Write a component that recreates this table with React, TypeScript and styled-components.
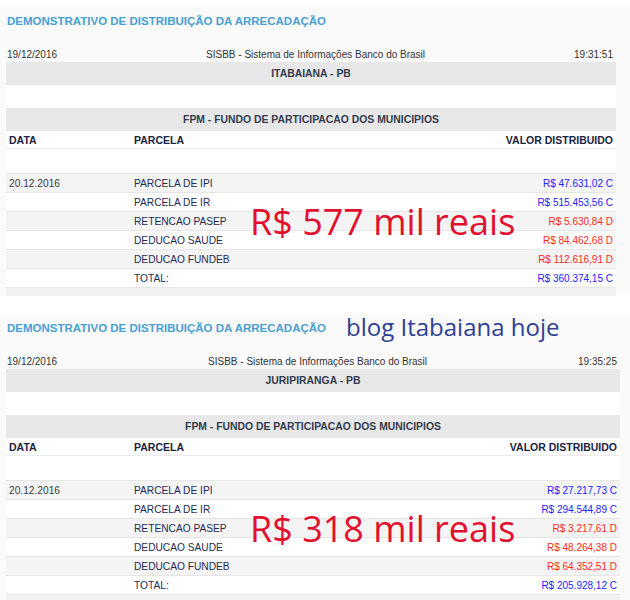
import React from "react"
import styled, { createGlobalStyle } from "styled-components"

type Lancamento = {
    data?: string
    parcela: string
    valor: string
    credito: boolean
}

type Demonstrativo = {
    hora: string
    municipio: string
    largura: number
    nota: string
    blog?: boolean
    linhas: Lancamento[]
}

const GlobalStyle = createGlobalStyle`
    body {
        margin: 0;
        background: #ffffff;
        font-family: "Liberation Sans", Arial, sans-serif;
    }
`

const Page = styled.div`
    width: 630px;
    height: 600px;
    overflow: hidden;
    padding-top: 7px;
    display: flex;
    flex-direction: column;
    gap: 19px;
`

const Panel = styled.section`
    background: #fafafa;
    padding: 0 0 0 6px;
    height: 288px;
    flex-shrink: 0;
`

const TitleRow = styled.div`
    display: flex;
    align-items: center;
    height: 27px;
    padding-left: 1px;
`

const Title = styled.h2`
    margin: 0;
    font-size: 11.5px;
    font-weight: bold;
    color: #4a9fd2;
`

const Blog = styled.span`
    margin-left: 20px;
    margin-top: -3px;
    font-family: "Open Sans", "Noto Sans", sans-serif;
    font-size: 24px;
    color: #2e3f95;
`

const Table = styled.div`
    margin-top: 14px;
    position: relative;
    width: ${(props: { width: number }) => props.width}px;
`

const InfoRow = styled.div`
    display: flex;
    justify-content: space-between;
    height: 14px;
    line-height: 14px;
    font-size: 10px;
    color: #333;
    padding: 0 3px 0 1px;
`

const Bar = styled.div`
    height: 23px;
    line-height: 23px;
    background: #e8e8e8;
    text-align: center;
    font-size: 10.4px;
    font-weight: bold;
    color: #333c4e;
`

const Blank = styled.div`
    height: ${(props: { h: number }) => props.h}px;
    background: #ffffff;
    ${(props: { h: number; line?: boolean }) => props.line && `border-bottom: 1px solid #e6e6e6;`}
`

const Grid = styled.div`
    display: grid;
    grid-template-columns: 125px 1fr 200px;
    height: 19px;
    align-items: center;
    font-size: 10.2px;
    background: ${(props: { striped?: boolean }) => (props.striped ? "#f4f4f4" : "#ffffff")};
    border-bottom: 1px solid #e6e6e6;
    box-sizing: border-box;
    padding: 0 3px 0 3px;
    color: #1d2b55;
`

const Head = styled(Grid)`
    height: 18px;
    font-weight: bold;
    font-size: 10.5px;
    color: #1a2442;
    background: #ffffff;
    border-bottom: 1px solid #ececec;
`

const DateCell = styled.span`
    color: #3a3a3a;
`

const Value = styled.span`
    text-align: right;
    font-size: 10px;
    color: ${(props: { credito: boolean }) => (props.credito ? "#2222ff" : "#ff2a1a")};
`

const Right = styled.span`
    text-align: right;
`

const Footer = styled.div`
    height: 8px;
    background: #f2f2f2;
`

const Nota = styled.div`
    position: absolute;
    left: 244px;
    font-family: "Open Sans", "Noto Sans", sans-serif;
    font-size: 36px;
    line-height: 1;
    color: #e2102e;
    top: ${(props: { top: number }) => props.top}px;
    pointer-events: none;
`

const demonstrativos: Demonstrativo[] = [
    {
        hora: "19:31:51",
        municipio: "ITABAIANA - PB",
        largura: 610,
        nota: "R$ 577 mil reais",
        linhas: [
            { data: "20.12.2016", parcela: "PARCELA DE IPI", valor: "R$ 47.631,02 C", credito: true },
            { parcela: "PARCELA DE IR", valor: "R$ 515.453,56 C", credito: true },
            { parcela: "RETENCAO PASEP", valor: "R$ 5.630,84 D", credito: false },
            { parcela: "DEDUCAO SAUDE", valor: "R$ 84.462,68 D", credito: false },
            { parcela: "DEDUCAO FUNDEB", valor: "R$ 112.616,91 D", credito: false },
            { parcela: "TOTAL:", valor: "R$ 360.374,15 C", credito: true },
        ],
    },
    {
        hora: "19:35:25",
        municipio: "JURIPIRANGA - PB",
        largura: 614,
        nota: "R$ 318 mil reais",
        blog: true,
        linhas: [
            { data: "20.12.2016", parcela: "PARCELA DE IPI", valor: "R$ 27.217,73 C", credito: true },
            { parcela: "PARCELA DE IR", valor: "R$ 294.544,89 C", credito: true },
            { parcela: "RETENCAO PASEP", valor: "R$ 3.217,61 D", credito: false },
            { parcela: "DEDUCAO SAUDE", valor: "R$ 48.264,38 D", credito: false },
            { parcela: "DEDUCAO FUNDEB", valor: "R$ 64.352,51 D", credito: false },
            { parcela: "TOTAL:", valor: "R$ 205.928,12 C", credito: true },
        ],
    },
]

const Painel: React.FC<{ d: Demonstrativo }> = ({ d }) => {
    return (
        <Panel>
            <TitleRow>
                <Title>DEMONSTRATIVO DE DISTRIBUIÇÃO DA ARRECADAÇÃO</Title>
                {d.blog && <Blog>blog Itabaiana hoje</Blog>}
            </TitleRow>
            <Table width={d.largura}>
                <InfoRow>
                    <span>19/12/2016</span>
                    <span>SISBB - Sistema de Informações Banco do Brasil</span>
                    <span>{d.hora}</span>
                </InfoRow>
                <Bar>{d.municipio}</Bar>
                <Blank h={23} />
                <Bar>FPM - FUNDO DE PARTICIPACAO DOS MUNICIPIOS</Bar>
                <Head>
                    <span>DATA</span>
                    <span>PARCELA</span>
                    <Right>VALOR DISTRIBUIDO</Right>
                </Head>
                <Blank h={24} line />
                {d.linhas.map((l, i) => (
                    <Grid key={l.parcela} striped={i % 2 === 0}>
                        <DateCell>{l.data}</DateCell>
                        <span>{l.parcela}</span>
                        <Value credito={l.credito}>{l.valor}</Value>
                    </Grid>
                ))}
                <Footer />
                <Nota top={156}>{d.nota}</Nota>
            </Table>
        </Panel>
    )
}

export default function App() {
    return (
        <>
            <GlobalStyle />
            <Page>
                {demonstrativos.map((d) => (
                    <Painel key={d.hora} d={d} />
                ))}
            </Page>
        </>
    )
}
